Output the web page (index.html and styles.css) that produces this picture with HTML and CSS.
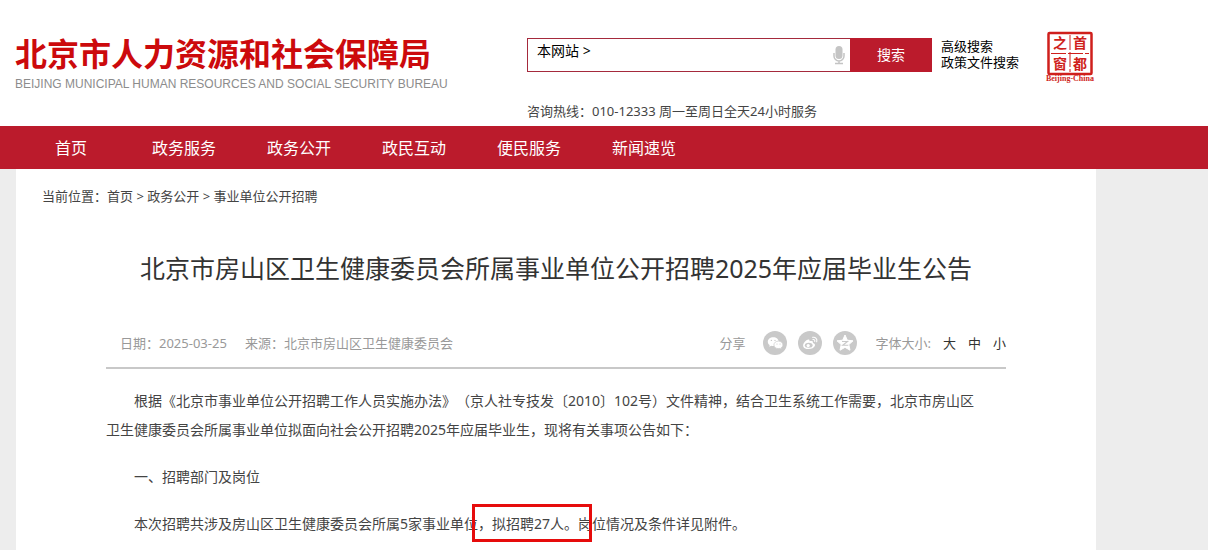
FILE: index.html
```html
<!DOCTYPE html>
<html lang="zh-CN">

<head>
    <meta charset="UTF-8">
    <meta name="viewport" content="width=device-width, initial-scale=1.0">
    <title>北京市人力资源和社会保障局</title>
    <link rel="stylesheet" href="styles.css">
</head>

<body>

    <header class="header">
        <div class="brand">
            <div class="brand-name">北京市人力资源和社会保障局</div>
            <div class="brand-en">BEIJING MUNICIPAL HUMAN RESOURCES AND SOCIAL SECURITY BUREAU</div>
        </div>

        <div class="tools">
            <form class="search">
                <div class="search-box">
                    <button type="button" class="scope">本网站 &gt;</button>
                    <input type="text" class="search-input" aria-label="搜索">
                    <svg class="mic" viewBox="0 0 12 20" width="12" height="20">
                        <rect x="2.500" y="1" width="7" height="13" rx="3.500" fill="#c4c4c4" />
                        <path d="M1 8v3a5 5 0 0 0 10 0V8M6 16v2.500M2 18.500h8" fill="none" stroke="#c4c4c4" stroke-width="1.500" />
                    </svg>
                </div>
                <button type="submit" class="search-btn">搜索</button>
            </form>
            <div class="hotline">咨询热线：010-12333 周一至周日全天24小时服务</div>
        </div>

        <div class="search-links">
            <a href="#">高级搜索</a>
            <a href="#">政策文件搜索</a>
        </div>

        <a href="#" class="seal">
            <svg viewBox="0 0 50 54" width="50" height="54">
                <rect x="3.500" y="3" width="43" height="41" rx="1" fill="none" stroke="#cf1f1c" stroke-width="2.500" />
                <path d="M25 5v37M6 23.500h38" stroke="#cf1f1c" stroke-width="1" stroke-dasharray="15 2" />
                <g class="seal-char">
                    <text x="15" y="18">之</text>
                    <text x="35" y="18">首</text>
                    <text x="15" y="39">窗</text>
                    <text x="35" y="39">都</text>
                </g>
                <text class="seal-en" x="25" y="51">Beijing-China</text>
            </svg>
        </a>
    </header>

    <nav class="nav">
        <a href="#">首页</a>
        <a href="#">政务服务</a>
        <a href="#">政务公开</a>
        <a href="#">政民互动</a>
        <a href="#">便民服务</a>
        <a href="#">新闻速览</a>
    </nav>

    <main class="page">
        <div class="crumbs">当前位置：<a href="#">首页</a> &gt; <a href="#">政务公开</a> &gt; <a href="#">事业单位公开招聘</a></div>

        <article class="article">
            <h1>北京市房山区卫生健康委员会所属事业单位公开招聘2025年应届毕业生公告</h1>

            <div class="meta">
                <span>日期：2025-03-25</span>
                <span>来源：北京市房山区卫生健康委员会</span>

                <div class="share">
                    <span>分享</span>
                    <a href="#" aria-label="微信">
                        <svg viewBox="0 0 24 24" width="24" height="24">
                            <circle cx="12" cy="12" r="12" fill="#c9c9c9" />
                            <path d="M10.300 6.200c-3.200 0-5.500 2-5.500 4.500 0 1.400.7 2.600 1.900 3.400l-.5 1.700 2-1c.7.2 1.400.3 2.100.3 3.100 0 5.400-2 5.400-4.400 0-2.500-2.300-4.500-5.400-4.500z" fill="#fff" />
                            <path d="M15.400 10.100c-2.500 0-4.500 1.700-4.500 3.800s2 3.700 4.500 3.700c.5 0 1-.1 1.500-.2l1.600.9-.4-1.500c1.100-.7 1.800-1.700 1.800-2.900 0-2.100-2-3.800-4.500-3.800z" fill="#fff" stroke="#c9c9c9" stroke-width=".7" />
                            <g fill="#c9c9c9">
                                <circle cx="8.400" cy="9.400" r=".7" />
                                <circle cx="12" cy="9.400" r=".7" />
                                <circle cx="14" cy="13" r=".6" />
                                <circle cx="17" cy="13" r=".6" />
                            </g>
                        </svg>
                    </a>
                    <a href="#" aria-label="微博">
                        <svg viewBox="0 0 24 24" width="24" height="24">
                            <circle cx="12" cy="12" r="12" fill="#c9c9c9" />
                            <path d="M10.800 8.500c.9.200.8 1.100.6 1.800 1.500-.6 3.700-.8 3.500 1.100-.1.500.1.700.7.900 1.200.4 1.700 1.300 1.300 2.500-.7 2-3.300 3.300-6.300 3.300-3.100 0-5.500-1.500-5.500-3.700 0-2.700 4-6.500 5.700-5.900z" fill="#fff" />
                            <ellipse cx="10.700" cy="14.300" rx="3.900" ry="2.500" fill="#c9c9c9" />
                            <circle cx="10.200" cy="14.600" r="1.600" fill="#fff" />
                            <path d="M14.600 6.300c2.800-.6 5 1.700 4.100 4.500M14.900 8.500c1.300-.2 2.200.7 1.900 2" fill="none" stroke="#fff" stroke-width="1.100" stroke-linecap="round" />
                        </svg>
                    </a>
                    <a href="#" aria-label="QQ空间">
                        <svg viewBox="0 0 24 24" width="24" height="24">
                            <circle cx="12" cy="12" r="12" fill="#c9c9c9" />
                            <path d="M12 4l2.300 5.200 5.700.6-4.200 3.800 1.200 5.600-5-2.900-5 2.900 1.200-5.600L4 9.800l5.700-.6z" fill="#fff" stroke="#fff" stroke-linejoin="round" />
                            <path d="M9 10.500h5.500L9.700 14.300h5.600" fill="none" stroke="#c9c9c9" stroke-width="1.100" />
                        </svg>
                    </a>
                </div>

                <div class="font-size">
                    <span>字体大小:</span>
                    <button type="button">大</button>
                    <button type="button">中</button>
                    <button type="button">小</button>
                </div>
            </div>

            <div class="content">
                <p>根据《北京市事业单位公开招聘工作人员实施办法》（京人社专技发〔2010〕102号）文件精神，结合卫生系统工作需要，北京市房山区<br>卫生健康委员会所属事业单位拟面向社会公开招聘2025年应届毕业生，现将有关事项公告如下：</p>
                <p>一、招聘部门及岗位</p>
                <p>本次招聘共涉及房山区卫生健康委员会所属5家事业单位<span class="mark">，拟招聘27人。</span>岗位情况及条件详见附件。</p>
            </div>
        </article>
    </main>

</body>

</html>
```
FILE: styles.css
```css
* {
    box-sizing: border-box;
}

body {
    margin: 0;
    font-family: "Noto Sans", "Noto Sans CJK SC", sans-serif;
    font-size: 13px;
    line-height: 16px;
    text-spacing-trim: space-all;
    color: #444;
    background-color: #ededed;
}

a {
    color: inherit;
    text-decoration: none;
}

button {
    padding: 0;
    border: none;
    background: none;
    font: inherit;
    color: inherit;
    cursor: pointer;
}

/* header */
.header {
    display: flex;
    align-items: flex-start;
    height: 126px;
    padding: 30px 15px 0;
    background-color: #fff;
}

.brand {
    width: 512px;
    padding-top: 4px;
    white-space: nowrap;
}

.brand-name {
    font-size: 32px;
    font-weight: 700;
    line-height: 40px;
    color: #cc0a0c;
}

.brand-en {
    font-family: "Liberation Sans", Arial, sans-serif;
    font-size: 12px;
    line-height: 20px;
    color: #8c8c8c;
}

.tools {
    width: 405px;
    padding-top: 8px;
}

.search {
    display: flex;
    height: 34px;
}

.search-box {
    display: flex;
    flex: 1;
    align-items: center;
    padding: 0 5px 0 9px;
    border: 1px solid #a52a3c;
    border-right: none;
}

.scope {
    align-self: flex-start;
    padding-top: 4px;
    font-size: 14px;
    color: #000;
}

.search-input {
    flex: 1;
    min-width: 0;
    border: none;
    outline: none;
    background: none;
}

.search-btn {
    width: 82px;
    font-size: 14px;
    color: #fff;
    background-color: #bb1b2c;
}

.hotline {
    padding-top: 31px;
}

.search-links {
    display: flex;
    flex-direction: column;
    width: 113px;
    padding: 8px 0 0 9px;
    color: #000;
}

.seal-char {
    font-size: 14px;
    font-weight: 700;
    text-anchor: middle;
    fill: #cf1f1c;
}

.seal-en {
    font-family: "Liberation Serif", serif;
    font-size: 8px;
    font-weight: 700;
    text-anchor: middle;
    fill: #cf1f1c;
}

/* navigation */
.nav {
    display: flex;
    gap: 51px;
    padding: 2px 55px 0;
    font-size: 16px;
    line-height: 41px;
    color: #fff;
    background-color: #bb1b2c;
}

.nav a:first-child {
    margin-right: 14px;
}

/* page */
.page {
    max-width: 1080px;
    min-height: 381px;
    margin-left: 16px;
    padding: 19px 90px 0;
    background-color: #fff;
}

.crumbs {
    margin-left: -64px;
}

h1 {
    margin: 46px 0 0;
    font-size: 25px;
    font-weight: 400;
    line-height: 36px;
    text-align: center;
    color: #333;
}

.meta {
    display: flex;
    align-items: center;
    gap: 18px;
    height: 50px;
    margin-top: 33px;
    padding-left: 14px;
    border-bottom: 2px solid #c8c8c8;
    color: #999;
}

.share {
    display: flex;
    align-items: center;
    gap: 11px;
    margin-left: auto;
}

.share span {
    margin-right: 7px;
}

.share svg {
    display: block;
}

.font-size {
    display: flex;
    gap: 12px;
}

.font-size button {
    color: #333;
}

.content {
    padding-top: 17px;
    font-size: 14px;
    line-height: 29px;
}

.content p {
    margin: 0 0 18px;
    text-indent: 2em;
}

.mark {
    position: relative;
    text-indent: 0;
}

/* red frame drawn over the sentence */
.mark::after {
    content: "";
    position: absolute;
    top: -10px;
    right: -14px;
    bottom: -9px;
    left: -6px;
    border: 3px solid #e60c0c;
}
```
